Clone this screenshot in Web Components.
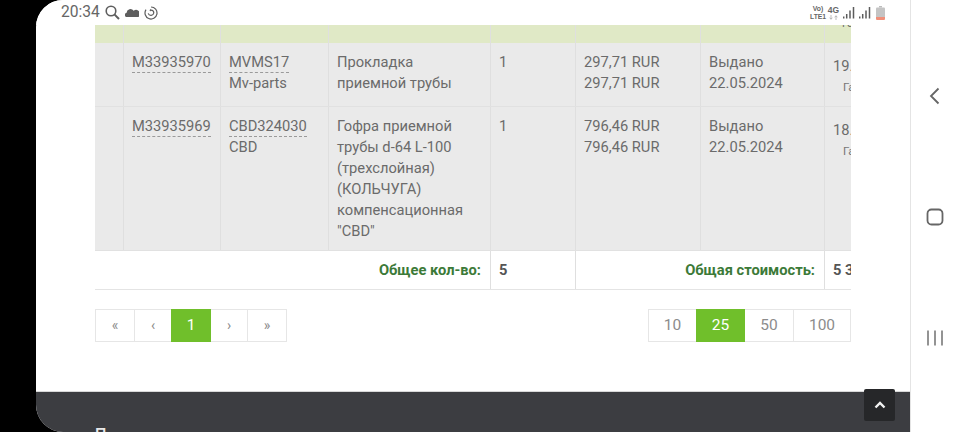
<!DOCTYPE html>
<html lang="ru">
<head>
<meta charset="utf-8">
<title>Заказы</title>
<style>
html,body{margin:0;padding:0;background:#000;width:960px;height:432px;overflow:hidden;font-family:Roboto,"Liberation Sans",sans-serif}
</style>
</head>
<body>
<phone-frame>
  <status-bar slot="status"></status-bar>
  <order-table>
    <order-row kind="head">
      <order-cell></order-cell><order-cell></order-cell><order-cell></order-cell><order-cell></order-cell>
      <order-cell></order-cell><order-cell></order-cell><order-cell></order-cell>
      <order-cell><clip-note>Ге</clip-note></order-cell>
    </order-row>
    <order-row>
      <order-cell></order-cell>
      <order-cell><dash-link>M33935970</dash-link></order-cell>
      <order-cell><dash-link>MVMS17</dash-link><br>Mv-parts</order-cell>
      <order-cell>Прокладка<br>приемной трубы</order-cell>
      <order-cell>1</order-cell>
      <order-cell>297,71 RUR<br>297,71 RUR</order-cell>
      <order-cell>Выдано<br>22.05.2024</order-cell>
      <order-cell><date-note date="19." note="Га"></date-note></order-cell>
    </order-row>
    <order-row>
      <order-cell></order-cell>
      <order-cell><dash-link>M33935969</dash-link></order-cell>
      <order-cell><dash-link>CBD324030</dash-link><br>CBD</order-cell>
      <order-cell>Гофра приемной<br>трубы d-64 L-100<br>(трехслойная)<br>(КОЛЬЧУГА)<br>компенсационная<br>"CBD"</order-cell>
      <order-cell>1</order-cell>
      <order-cell>796,46 RUR<br>796,46 RUR</order-cell>
      <order-cell>Выдано<br>22.05.2024</order-cell>
      <order-cell><date-note date="18." note="Га"></date-note></order-cell>
    </order-row>
    <order-row kind="total">
      <order-cell span="4" label>Общее кол-во:</order-cell>
      <order-cell strong>5</order-cell>
      <order-cell span="2" label divided>Общая стоимость:</order-cell>
      <order-cell strong>5 3</order-cell>
    </order-row>
  </order-table>
  <pager-bar>
    <pager-group>
      <pager-item w="39">«</pager-item><pager-item w="37">‹</pager-item><pager-item w="39" active big>1</pager-item><pager-item w="37">›</pager-item><pager-item w="39">»</pager-item>
    </pager-group>
    <pager-group>
      <pager-item w="48" big>10</pager-item><pager-item w="48" active big>25</pager-item><pager-item w="49" big>50</pager-item><pager-item w="57" big>100</pager-item>
    </pager-group>
  </pager-bar>
  <site-footer slot="footer">П</site-footer>
  <nav-keys slot="nav"></nav-keys>
</phone-frame>

<script>
const def=(name,css,html,extra)=>{
  customElements.define(name,class extends HTMLElement{
    constructor(){super();this.attachShadow({mode:'open'}).innerHTML=`<style>${css}</style>${html}`;}
    connectedCallback(){if(extra)extra(this);}
  });
};
def('phone-frame',`
  :host{display:flex;width:960px;height:432px;background:#000;color:#6b6b6b;font:14.7px/21px Roboto,"Liberation Sans",sans-serif}
  .screen{margin-left:36px;width:874px;height:432px;background:#fff;border-radius:27px 0 0 27px;overflow:hidden;display:flex;flex-direction:column;position:relative}
  .content{flex:1;padding-left:59px;width:756px;display:flex;flex-direction:column;min-height:0}
  .nav{width:50px;height:432px;background:#fff;border-left:1px solid #e4e4e4;box-sizing:border-box}
  .top{position:absolute;right:15px;top:389px;width:31px;height:32px;background:#262729;border-radius:2px;display:flex;align-items:center;justify-content:center}
`,`<div class="screen"><slot name="status"></slot><div class="content"><slot></slot></div><slot name="footer"></slot>
   <div class="top"><svg width="12" height="8" viewBox="0 0 12 8"><path d="M1.5 6.5 6 2l4.500 4.500" fill="none" stroke="#f2f2f2" stroke-width="2.400"/></svg></div></div>
   <div class="nav"><slot name="nav"></slot></div>`);
def('status-bar',`
  :host{display:flex;align-items:center;height:25px;flex:none;padding-left:25px;padding-right:25px;color:#666;background:#fff}
  .t{font-size:15.6px;line-height:25px;width:44px}
  svg{display:block;flex:none}
  .l{display:flex;align-items:center;gap:5px}
  .r{margin-left:auto;display:flex;align-items:center}
  .v{font:700 6.800px/8px "Liberation Sans",sans-serif;text-align:center;color:#666;width:16px}
  .g{font:700 8.500px/8px "Liberation Sans",sans-serif;text-align:center;color:#666;width:11px;margin-left:2px;display:flex;flex-direction:column;align-items:center}
  .g svg{margin-top:1px}
`,`<span class="t">20:34</span>
  <div class="l">
    <svg width="15" height="15" viewBox="0 0 15 15"><circle cx="6" cy="6" r="4.800" fill="none" stroke="#5e5e5e" stroke-width="1.600"/><path d="M9.400 9.400 14 14" stroke="#5e5e5e" stroke-width="2"/></svg>
    <svg width="14" height="10" viewBox="0 0 14 10"><path d="M1 9a2.300 2.300 0 0 1 .6-4.300A3.800 3.800 0 0 1 8.600 2.800 3.200 3.200 0 0 1 13.500 9z" fill="#5e5e5e"/></svg>
    <svg width="14" height="14" viewBox="0 0 14 14"><path d="M7 1a6 6 0 1 1-5 2.700" fill="none" stroke="#5e5e5e" stroke-width="1.200"/><path d="M4.200 7.400A2.900 2.900 0 0 0 9.800 7 2.900 2.900 0 0 0 7 4.100" fill="none" stroke="#5e5e5e" stroke-width="1.200"/><path d="M7 2.800v2.700L5.400 4.200z" fill="#5e5e5e"/></svg>
  </div>
  <div class="r">
    <div class="v">Vo)<br>LTE1</div>
    <div class="g"><span>4G</span><svg width="9" height="5" viewBox="0 0 9 5"><path d="M2 0v4M.7 2.700 2 4.300 3.300 2.700M7 5V1M5.700 2.300 7 .7 8.300 2.300" fill="none" stroke="#aaa" stroke-width=".8"/></svg></div>
    <svg style="margin-left:4px" width="12" height="13" viewBox="0 0 12 13"><path d="M.7 10.500v2M3.700 8v4.500M7 4.500v8M10.500 1v11.500" stroke="#5c5c5c" stroke-width="1.500"/></svg>
    <svg style="margin-left:4px" width="12" height="13" viewBox="0 0 12 13"><path d="M.7 10.500v2M3.700 8v4.500M7 4.500v8M10.500 1v11.500" stroke="#5c5c5c" stroke-width="1.500"/></svg>
    <svg style="margin-left:5px" width="9" height="14" viewBox="0 0 9 14"><path d="M3 0h3v1.500H3z" fill="#bdbdbd"/><rect y="1.500" width="9" height="10" fill="#c4c4c4" rx="1"/><path d="M0 11h9v2a1 1 0 0 1-1 1H1a1 1 0 0 1-1-1z" fill="#f0907a"/></svg>
  </div>`);
def('order-table',`
  :host{display:block;width:756px;overflow:hidden;flex:none;--cols:28px 97px 108px 162px 85px 125px 124px 27px}
`,`<slot></slot>`);
def('order-row',`
  :host{display:grid;grid-template-columns:var(--cols);background:#eaeaea;border-bottom:1px solid #e1e1e1;box-sizing:border-box}
  :host([kind=head]){background:#e0e9c6;height:18px;border-bottom:0;overflow:hidden}
  :host([kind=total]){background:#fff;height:39px;border-bottom:1px solid #e4e4e4}
`,`<slot></slot>`);
def('order-cell',`
  :host{display:block;padding:9px 0 8px 8px;border-left:1px solid #dfdfdf;box-sizing:border-box;white-space:nowrap;min-width:0;overflow:hidden}
  :host(:first-child){border-left:0}
  :host([label]){text-align:right;padding:0 9px 0 0;font-weight:700;color:#3c7a38;line-height:38px;border-left:0}
  :host([divided]){border-left:1px solid #dfdfdf}
  :host([strong]){padding:0 0 0 8px;font-weight:700;color:#555;line-height:38px}
`,`<slot></slot>`,el=>{const s=el.getAttribute('span');if(s)el.style.gridColumn='span '+s;});
def('dash-link',`:host{display:inline;padding-bottom:1px;border-bottom:1px dashed #9a9a9a}`,`<slot></slot>`);
def('clip-note',`:host{display:block;font-size:10.500px;line-height:10px;margin:-15px 0 0 9px;color:#666}`,`<slot></slot>`);
def('date-note',`
  :host{display:block;margin-top:4px}
  .n{display:block;font-size:11.500px;line-height:21px;margin-left:10px;color:#777}
`,``,el=>{if(!el.shadowRoot.querySelector('.n')){el.shadowRoot.append(document.createTextNode(el.getAttribute('date')));const n=document.createElement('span');n.className='n';n.textContent=el.getAttribute('note');el.shadowRoot.append(n);}});
def('pager-bar',`:host{display:flex;justify-content:space-between;padding-top:19px;width:756px;flex:none}`,`<slot></slot>`);
def('pager-group',`:host{display:flex}`,`<slot></slot>`);
def('pager-item',`
  :host{display:flex;align-items:center;justify-content:center;height:33px;box-sizing:border-box;border:1px solid #e6e6e6;margin-left:-1px;color:#8c8c8c;font-size:14px;background:#fff}
  :host(:first-child){margin-left:0}
  :host([big]){font-size:15.500px}
  :host([active]){background:#70bf2b;border-color:#70bf2b;color:#fff;position:relative;z-index:1}
`,`<slot></slot>`,el=>{el.style.width=(+el.getAttribute('w')+1)+'px';});
def('site-footer',`
  :host{display:block;margin-top:auto;height:41px;flex:none;box-sizing:border-box;background:#3c3d41;border-top:1px solid #d8d8d8;padding:32px 0 0 59px;color:#e8e8e8;font:500 16px/22px Roboto,"Liberation Sans",sans-serif;overflow:hidden}
`,`<slot></slot>`);
def('nav-keys',`
  :host{display:block;height:432px;position:relative}
  svg{position:absolute;display:block}
`,`<svg style="left:17px;top:87px" width="14" height="18" viewBox="0 0 14 18"><path d="M10.500 1.500 3 9l7.500 7.500" fill="none" stroke="#666" stroke-width="1.800"/></svg>
   <svg style="left:15px;top:208px" width="18" height="18" viewBox="0 0 18 18"><rect x="1.500" y="1.500" width="15" height="15" rx="4" fill="none" stroke="#666" stroke-width="1.800"/></svg>
   <svg style="left:15px;top:330px" width="18" height="16" viewBox="0 0 18 16"><path d="M2 .5v15M9 .5v15M16 .5v15" stroke="#888" stroke-width="1.800"/></svg>`);
</script>
</body>
</html>
